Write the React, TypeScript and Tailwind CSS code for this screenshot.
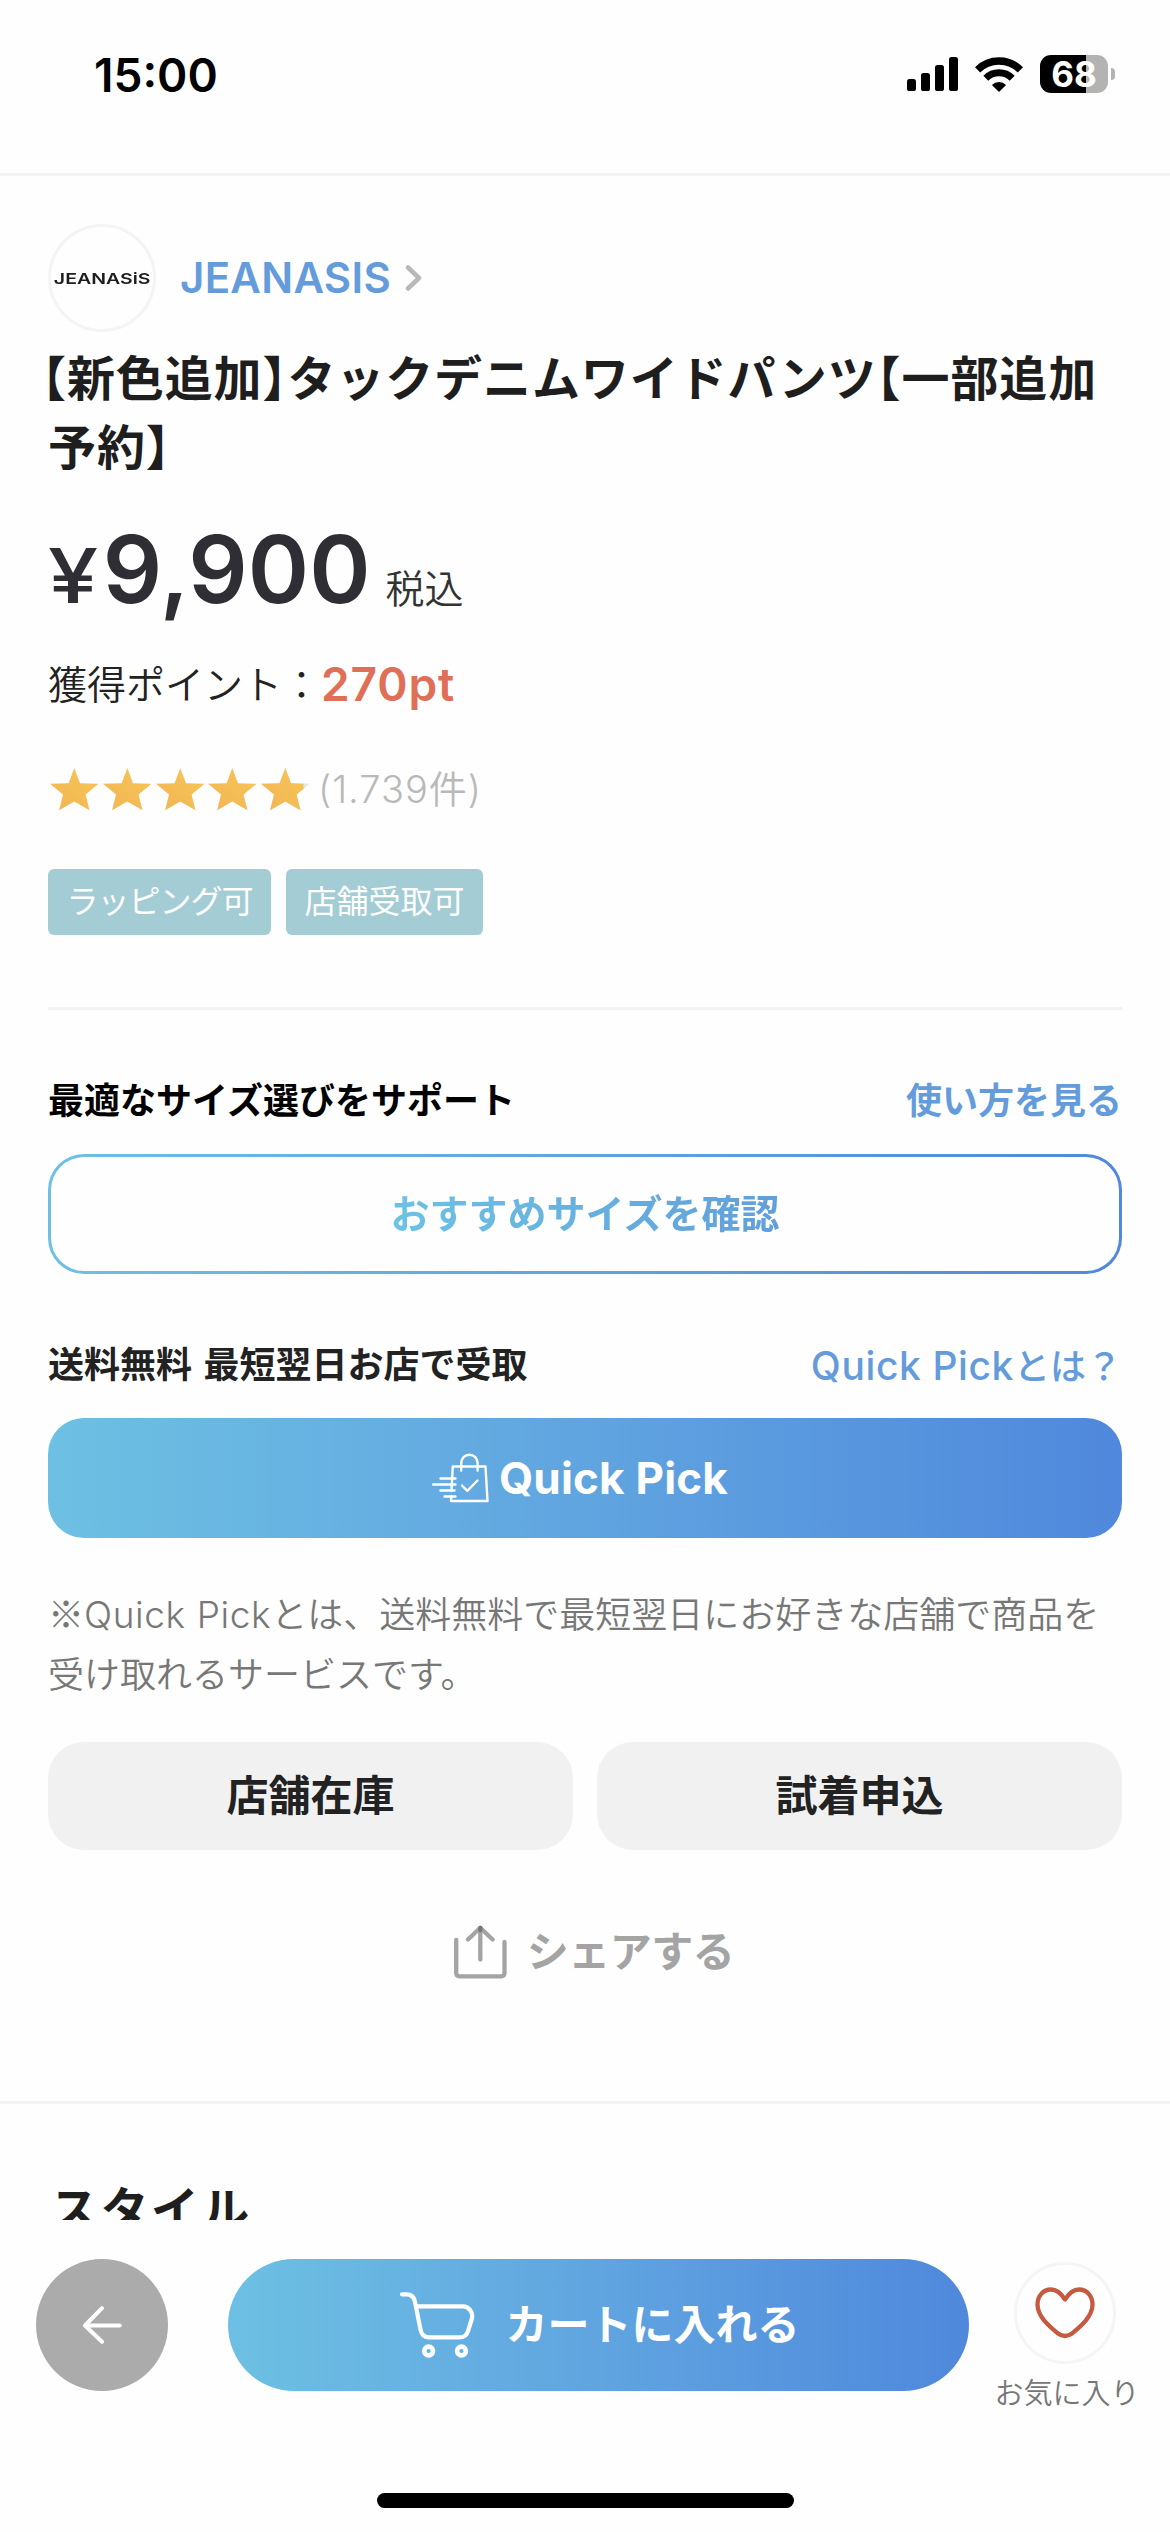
import { useState } from 'react';

const TAGS = [
    { label: 'ラッピング可', width: 'w-[223px]', spacing: 'tracking-[-1px]' },
    { label: '店舗受取可', width: 'w-[197px]', spacing: 'tracking-normal' },
];

const GRADIENT = 'bg-linear-to-r from-[#6dc0e3] via-[#60a4e0] to-[#4f88dc]';

function SignalIcon() {
    return (
        <svg width="51" height="34" viewBox="0 0 51 34" fill="#000">
            <rect x="0" y="22" width="9" height="12" rx="2.6" />
            <rect x="14" y="16" width="9" height="18" rx="2.6" />
            <rect x="28" y="8" width="9" height="26" rx="2.6" />
            <rect x="42" y="0" width="9" height="34" rx="2.6" />
        </svg>
    );
}

function WifiIcon() {
    return (
        <svg width="48" height="36" viewBox="0 0 48 36" fill="none" stroke="#000">
            <path d="M2.6 13.8 A30.5 30.5 0 0 1 45.4 13.8" strokeWidth="7.4" />
            <path d="M10.8 22.2 A18.7 18.7 0 0 1 37.2 22.2" strokeWidth="7" />
            <path d="M24 36 L16.9 28.9 A10 10 0 0 1 31.1 28.9 Z" fill="#000" stroke="none" />
        </svg>
    );
}

function Battery() {
    return (
        <div className="flex items-center gap-[3px]">
            <div className="flex h-[38px] w-[68px] items-center justify-center rounded-[11px] bg-linear-to-r from-black from-[68%] to-[#b3b3b3] to-[68%]">
                <span className="text-[35px] leading-none font-bold text-white">68</span>
            </div>
            <div className="h-3 w-1 rounded-r-full bg-[#b3b3b3]" />
        </div>
    );
}

function StatusBar() {
    return (
        <header className="flex h-[176px] shrink-0 items-start justify-between border-b-[3px] border-[#f3f3f3] pr-[55px] pl-[94px]">
            <span className="mt-[47px] text-[46px] leading-[56px] font-semibold text-black">15:00</span>
            <div className="mt-[55px] flex h-[38px] items-center gap-[17px]">
                <SignalIcon />
                <WifiIcon />
                <Battery />
            </div>
        </header>
    );
}

function Star({ partial = false }: { partial?: boolean }) {
    const points = '24.3,0 30,15.3 48.6,15.8 35.6,26.5 39.5,42.3 24.3,33.4 9.1,42.3 13,26.5 0,15.8 18.6,15.3';
    return (
        <svg width="48.6" height="43" viewBox="0 0 48.6 43">
            <defs>
                <clipPath id="starFill">
                    <rect width="42.5" height="43" />
                </clipPath>
                <linearGradient id="starColor" x1="0" x2="1" y1="1" y2="0">
                    <stop offset="0" stopColor="#f2b455" />
                    <stop offset="1" stopColor="#f7c655" />
                </linearGradient>
            </defs>
            {partial && <polygon points={points} fill="#e4e4e4" />}
            <polygon points={points} fill="url(#starColor)" clipPath={partial ? 'url(#starFill)' : undefined} />
        </svg>
    );
}

function QuickBagIcon() {
    return (
        <svg width="57" height="50" viewBox="0 0 57 50" fill="none" stroke="#fff" strokeWidth="2.4" strokeLinecap="round" strokeLinejoin="round">
            <path d="M19.5 37.5 L20.8 13.5 H53.5 L55.5 48 H19 L19.3 43" />
            <path d="M29.2 17.5 V10 A8.2 8.2 0 0 1 45.6 10 V17.5" />
            <path d="M30 32.5 L35.3 37.8 L45.5 27.5" />
            <path d="M8.5 25.5 H23.5 M1.2 31.5 H23.5 M8.5 37.5 H22.5 M12.5 43.5 H23.5" />
        </svg>
    );
}

function ShareIcon() {
    return (
        <svg width="53" height="54" viewBox="0 0 53 54" fill="none" stroke="#a4a4a4" strokeWidth="4.3" strokeLinecap="round" strokeLinejoin="round">
            <path d="M2.2 15 V48 Q2.2 51.3 5.5 51.3 H47.2 Q50.5 51.3 50.5 48 V17" />
            <path d="M14 14.5 L26.3 2.8 L38.6 14.5 M26.3 2.8 V34.5" />
            <path d="M26.3 2.8 V5" stroke="#767676" />
        </svg>
    );
}

function CartIcon() {
    return (
        <svg width="76" height="68" viewBox="0 0 76 68" fill="none" stroke="#fff" strokeWidth="4.2" strokeLinecap="round" strokeLinejoin="round">
            <path d="M3 3.3 H7.5 C13 3.3 15.2 6.5 16 11 L21.6 39 C22.6 43.8 25.5 46.3 30 46.3 H61 C65.5 46.3 68 44 69.2 39.5 L72.8 28 C74.6 21.5 70 15.3 64 15.3 H17.5" />
            <circle cx="29.6" cy="60" r="4.4" strokeWidth="4.6" />
            <circle cx="62.5" cy="60" r="4.4" strokeWidth="4.6" />
        </svg>
    );
}

function HeartIcon() {
    return (
        <svg width="60" height="52" viewBox="0 0 60 52" fill="none" stroke="#c55a40" strokeWidth="4.3" strokeLinejoin="round">
            <path d="M30 12.5 C26.5 7 21.5 2.5 16 2.5 C8 2.5 2.5 9 2.5 17.5 C2.5 29.5 14 39 23 46.5 Q30 51.5 37 46.5 C46 39 57.5 29.5 57.5 17.5 C57.5 9 52 2.5 44 2.5 C38.5 2.5 33.5 7 30 12.5 Z" />
        </svg>
    );
}

function ProductInfo() {
    return (
        <section className="flex flex-col px-12 pt-12">
            <a className="flex h-[108px] items-center">
                <span className="flex size-[108px] items-center justify-center rounded-full border-[3px] border-[#f4f4f4]">
                    <span className="scale-x-130 text-[15px] leading-none font-semibold text-[#1d1d1d]">JEANASiS</span>
                </span>
                <span className="ml-6 text-[42px] leading-none font-semibold tracking-[0.3px] text-[#649cdb]">JEANASIS</span>
                <svg className="ml-[14px]" width="17" height="28" viewBox="0 0 17 28" fill="none" stroke="#b8b8b8" strokeWidth="4.5" strokeLinecap="round" strokeLinejoin="round">
                    <path d="M3 3.5 L14 14 L3 24.5" />
                </svg>
            </a>

            <h1 className="mt-3 -indent-1.5 text-[48px] leading-[69px] font-bold tracking-[0.9px] whitespace-nowrap text-[#1e1e1e] [font-feature-settings:'halt']">
                【新色追加】タックデニムワイドパンツ【一部追加
                <br />
                予約】
            </h1>

            <div className="mt-[30px] flex h-[114px] items-baseline text-[#2f2e35]">
                <span className="origin-left scale-x-120 text-[75px] leading-[114px] font-medium">¥</span>
                <span className="ml-[13px] text-[93px] leading-[114px] font-semibold">9,900</span>
                <span className="ml-[15px] text-[39px] font-[350] text-[#333]">税込</span>
            </div>

            <div className="mt-[30px] flex h-14 items-center">
                <span className="text-[39px] leading-none font-[350] text-[#222]">獲得ポイント：</span>
                <span className="text-[46px] leading-none font-semibold tracking-[0.9px] text-[#e06f57]">270pt</span>
            </div>

            <div className="mt-[53px] flex h-12 items-center gap-[4.2px] pl-[2px]">
                <Star />
                <Star />
                <Star />
                <Star />
                <Star partial />
                <span className="ml-1 text-[38px] leading-none font-[350] tracking-[1px] text-[#b9b9b9]">(1.739件)</span>
            </div>

            <div className="mt-14 flex gap-[15px]">
                {TAGS.map((tag) => (
                    <span
                        key={tag.label}
                        className={`${tag.width} ${tag.spacing} flex h-[66px] items-center justify-center rounded-md bg-[#a3ccd4] text-[32px] leading-none text-white`}
                    >
                        {tag.label}
                    </span>
                ))}
            </div>

            <hr className="mt-[72px] border-t-[3px] border-[#f3f3f3]" />
        </section>
    );
}

function Actions() {
    return (
        <section className="flex flex-col px-12 pt-[63px]">
            <div className="flex h-14 items-center justify-between text-[36px] leading-none font-bold">
                <h2 className="text-black">最適なサイズ選びをサポート</h2>
                <a className="text-[#649cdb]">使い方を見る</a>
            </div>
            <button className={`${GRADIENT} mt-[25px] h-[120px] rounded-[36px] p-[3px]`}>
                <span className="flex h-full items-center justify-center rounded-[33px] bg-[#fefefe]">
                    <span className="bg-linear-to-r from-[#6cc2e4] to-[#619fdb] bg-clip-text text-[39px] leading-[60px] font-bold text-transparent">
                        おすすめサイズを確認
                    </span>
                </span>
            </button>

            <div className="mt-[63px] flex h-14 items-center justify-between text-[36px] leading-none">
                <h2 className="font-bold text-[#222] [word-spacing:3px]">送料無料 最短翌日お店で受取</h2>
                <a className="font-medium text-[#649cdb]">
                    <span className="text-[39px] tracking-[0.6px]">Quick Pick</span>とは？
                </a>
            </div>
            <button className={`${GRADIENT} mt-[25px] flex h-[120px] items-center justify-center gap-[10px] rounded-[36px] pr-[10px] text-white`}>
                <QuickBagIcon />
                <span className="text-[44px] leading-none font-bold tracking-[0.2px]">Quick Pick</span>
            </button>

            <p className="mt-[47px] h-[121px] text-[36px] leading-[60px] font-[350] whitespace-nowrap text-[#777]">
                <span className="font-['Noto_Sans_CJK_JP',sans-serif] leading-none">※</span>
                <span className="text-[37px] leading-none tracking-[0.6px]">Quick Pick</span>とは、送料無料で最短翌日にお好きな店舗で商品を
                <br />
                受け取れるサービスです。
            </p>

            <div className="mt-9 grid grid-cols-2 gap-6">
                <button className="h-[108px] rounded-[36px] bg-[#f1f1f1] text-[42px] leading-none font-bold text-[#222]">店舗在庫</button>
                <button className="h-[108px] rounded-[36px] bg-[#f1f1f1] text-[42px] leading-none font-bold text-[#222]">試着申込</button>
            </div>

            <button className="mt-[72px] flex h-[60px] items-center justify-center gap-5 pl-[18px] text-[#a4a4a4]">
                <ShareIcon />
                <span className="text-[42px] leading-none font-bold tracking-[-0.5px]">シェアする</span>
            </button>
        </section>
    );
}

function BottomBar({ liked, onLike }: { liked: boolean; onLike: () => void }) {
    return (
        <footer className="flex h-[312px] shrink-0 flex-col items-center justify-between bg-[#fefefe] pt-[39px] pb-6">
            <div className="flex w-full items-start pl-9">
                <button className="flex size-[132px] items-center justify-center rounded-full bg-[#ababab]">
                    <svg width="40" height="38" viewBox="0 0 40 38" fill="none" stroke="#fff" strokeWidth="4" strokeLinecap="round" strokeLinejoin="round">
                        <path d="M20 2.2 L3 19.5 L20 35.8 M3 19.5 H37.8" />
                    </svg>
                </button>
                <button className={`${GRADIENT} ml-[60px] flex h-[132px] w-[741px] items-center justify-center gap-[30px] rounded-full pl-[2px] text-white`}>
                    <CartIcon />
                    <span className="text-[42px] leading-none font-bold">カートに入れる</span>
                </button>
                <button onClick={onLike} aria-pressed={liked} className="mt-[3px] ml-[21px] flex w-[150px] flex-col items-center">
                    <span className="flex size-[102px] items-center justify-center rounded-full border-[3px] border-[#f5f5f5]">
                        <HeartIcon />
                    </span>
                    <span className="mt-[15px] pl-1 text-[29px] leading-none font-[350] whitespace-nowrap text-[#777]">お気に入り</span>
                </button>
            </div>
            <div className="h-[15px] w-[417px] rounded-full bg-black" />
        </footer>
    );
}

export default function App() {
    const [liked, setLiked] = useState(false);

    return (
        <div className="flex h-[2532px] w-[1170px] flex-col overflow-hidden bg-[#fefefe] font-[Inter,'Noto_Sans_CJK_JP',sans-serif]">
            <StatusBar />
            <main className="h-[2044px] overflow-hidden">
                <ProductInfo />
                <Actions />
                <section className="mt-[119px] border-t-[3px] border-[#f3f3f3] px-[50px] pt-[76px]">
                    <h2 className="text-[48px] leading-[60px] font-bold tracking-[2.4px] text-[#1e1e1e]">スタイル</h2>
                </section>
            </main>
            <BottomBar liked={liked} onLike={() => setLiked(!liked)} />
        </div>
    );
}
